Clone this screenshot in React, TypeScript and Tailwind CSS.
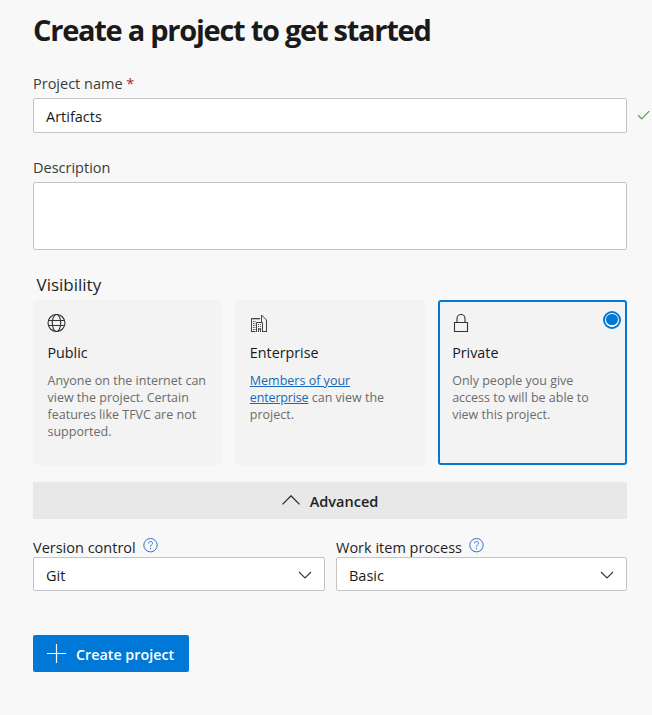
import type { ReactNode } from "react";

function Check() {
  return (
    <svg className="ml-[10px] h-3 w-3.5 shrink-0" viewBox="0 0 14 12" fill="none" stroke="#5a9e55" strokeWidth="1.2">
      <path d="M1 5.2 4.7 8.8 12.2 1.2" />
    </svg>
  );
}

function Globe() {
  return (
    <svg className="-ml-px size-[19px]" viewBox="0 0 19 19" fill="none" stroke="#333" strokeWidth="1.1">
      <circle cx="9.5" cy="9" r="8.5" />
      <ellipse cx="9.5" cy="9" rx="4.2" ry="8.5" />
      <path d="M1.4 6.5h16.2M1.4 11.5h16.2" />
    </svg>
  );
}

function Buildings() {
  return (
    <svg className="size-[19px]" viewBox="0 0 19 19" fill="none" stroke="#444" strokeWidth="1">
      <path d="M1.5 18V4.5h8.5M1 17.5h4.500M6.500 18V8.500h6V18M11.500 8V1l5 5v12M13 17.500h4M8.500 18v-3h2v3" />
      <path d="M1.5 5h8.500" strokeOpacity=".6" />
      <path d="M3.500 7v10M5 7v10M8.500 10v5M10.500 10v5" strokeDasharray="1 1" stroke="#555" />
    </svg>
  );
}

function Lock() {
  return (
    <svg className="size-[19px]" viewBox="0 0 19 19" fill="none" stroke="#333" strokeWidth="1.1">
      <path d="M2.5 8.5h13v9h-13zM5 8.5V4.5a4 4 0 0 1 8 0v4" />
    </svg>
  );
}

function Help() {
  return (
    <svg className="size-[15px]" viewBox="0 0 15 15" fill="none" stroke="#3a72c4" strokeWidth="1">
      <circle cx="7.5" cy="7.2" r="6.7" />
      <path d="M5.6 5.5c0-1.3.9-2 2-2s1.9.8 1.9 1.8c0 1.5-2 1.6-2 3.3M7.5 9.9v1.3" />
    </svg>
  );
}

function Card({ icon, title, selected, children }: { icon: ReactNode; title: string; selected?: boolean; children: ReactNode }) {
  return (
    <div className={`relative h-[165px] rounded-[3px] border-2 bg-[#f3f3f3] pt-[12px] pl-[12.5px] ${selected ? "border-[#0078d4]" : "border-[#f3f3f3]"}`}>
      {icon}
      <div className="mt-[10px] text-[14.3px] leading-5 text-[#1a1a1a]">{title}</div>
      <div className="mt-[9px] text-[12.5px] leading-[17px] whitespace-nowrap text-[#6b6b6b]">{children}</div>
      {selected && (
        <span className="absolute top-[8.5px] right-[4px] flex size-[18px] items-center justify-center rounded-full border-2 border-[#0078d4] bg-white">
          <span className="size-[11.5px] rounded-full bg-[#0078d4]" />
        </span>
      )}
    </div>
  );
}

function Select({ label, value }: { label: string; value: string }) {
  return (
    <div>
      <div className="flex h-[19px] items-start text-[14.5px] leading-5 text-[#1f1f1f]">
        <span>{label}</span>
        <span className="ml-[7px]"><Help /></span>
      </div>
      <div className="flex h-[34px] items-center justify-between rounded-[2px] border border-[#c4c4c4] bg-white pr-3 pl-3 text-[14.5px] text-[#1a1a1a]">
        <span className="pt-[3px] leading-5">{value}</span>
        <svg className="mt-[2px] h-2 w-[14px]" viewBox="0 0 14 8" fill="none" stroke="#333" strokeWidth="1.1">
          <path d="m1 1 6 6 6-6" />
        </svg>
      </div>
    </div>
  );
}

export default function App() {
  return (
    <main className="h-[715px] w-[652px] bg-[#f8f8f8] pt-[10px] pl-[33px] font-['Open_Sans',sans-serif]">
      <h1 className="h-10 text-[29px] leading-10 font-bold tracking-[-1.26px] whitespace-nowrap text-[#1a1a1a]">Create a project to get started</h1>

      <div className="mt-6 h-6 text-[14.5px] leading-5 text-[#3b3b3b]">Project name <span className="text-[#b0203a]">*</span></div>
      <div className="flex items-center">
        <div className="h-[35px] w-[594px] rounded-[2px] border border-[#c4c4c4] bg-white pt-[8px] pl-3 text-[14.5px] leading-5 text-[#1a1a1a]">Artifacts</div>
        <Check />
      </div>

      <div className="mt-[25px] h-6 text-[14.5px] leading-5 text-[#3b3b3b]">Description</div>
      <div className="h-[68px] w-[594px] rounded-[2px] border border-[#c4c4c4] bg-white" />

      <div className="mt-[23px] h-[27px] pl-[3.5px] text-[17px] leading-6 text-[#1f1f1f]">Visibility</div>
      <div className="grid w-[594px] grid-cols-3 gap-[13px]">
        <Card icon={<Globe />} title="Public">
          Anyone on the internet can<br />view the project. Certain<br />features like TFVC are not<br />supported.
        </Card>
        <Card icon={<Buildings />} title="Enterprise">
          <span className="text-[#1768b8] underline">Members of your<br /><span className="tracking-[-0.15px]">enterprise</span></span> can view the<br />project.
        </Card>
        <Card icon={<Lock />} title="Private" selected>
          Only people you give<br />access to will be able to<br />view this project.
        </Card>
      </div>

      <div className="mt-[17px] flex h-[37px] w-[594px] items-center justify-center bg-[#e8e8e8] text-[14.5px] font-semibold text-[#1f1f1f]">
        <svg className="mt-[-2px] mr-[10px] h-[10px] w-[18px]" viewBox="0 0 18 10" fill="none" stroke="#222" strokeWidth="1.2">
          <path d="m.5 9.3 8.500-8.500 8.500 8.500" />
        </svg>
        <span className="pt-[2px]">Advanced</span>
      </div>

      <div className="mt-[19px] grid w-[594px] grid-cols-[292px_291px] gap-[11px]">
        <Select label="Version control" value="Git" />
        <Select label="Work item process" value="Basic" />
      </div>

      <div className="mt-11 flex h-[37px] w-[156px] items-center rounded-[2px] bg-[#0078d7] pl-[14px] text-[14.3px] font-semibold whitespace-nowrap text-white">
        <svg className="mt-[-1px] mr-[10px] size-[19px]" viewBox="0 0 19 19" fill="none" stroke="#fff" strokeWidth="1.2">
          <path d="M9.5 0v19M0 9.5h19" />
        </svg>
        <span className="pt-[2px]">Create project</span>
      </div>
    </main>
  );
}
